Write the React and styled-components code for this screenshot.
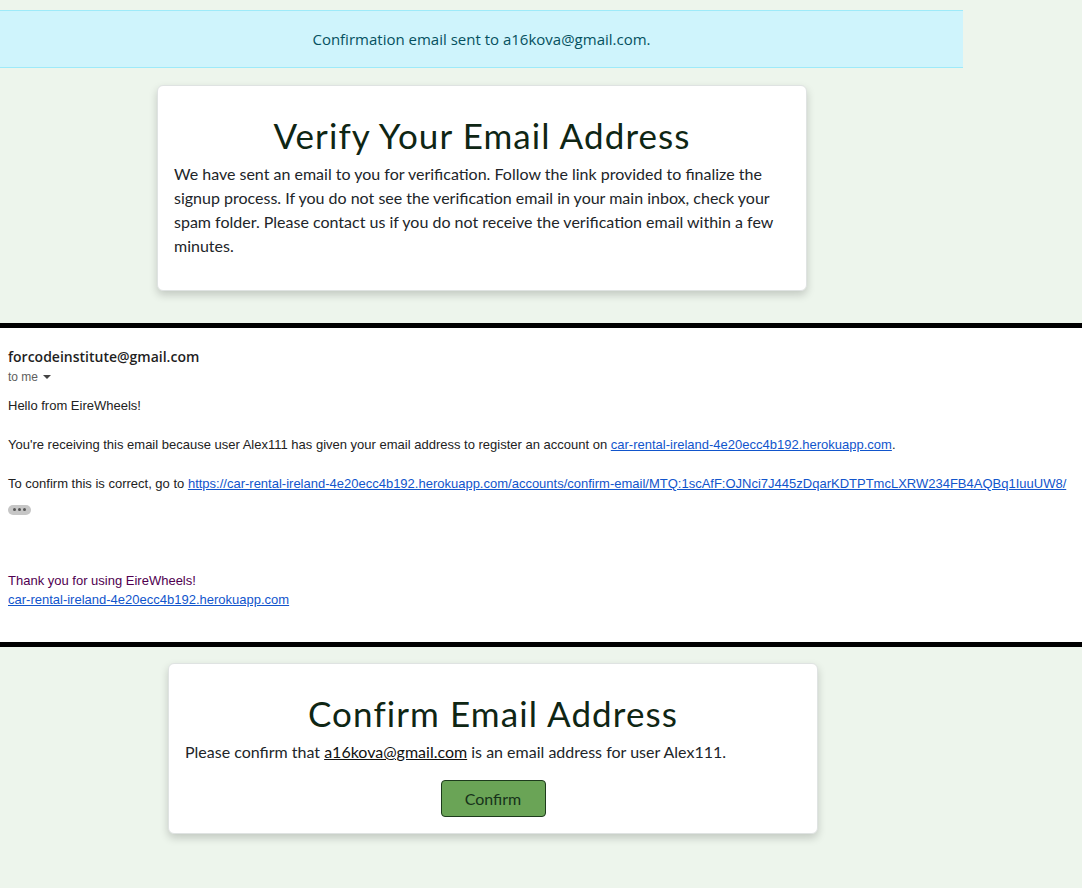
import React from 'react';
import styled, { createGlobalStyle } from 'styled-components';

const GlobalStyle = createGlobalStyle`
  * { box-sizing: border-box; }
  html, body {
    margin: 0;
    padding: 0;
    background: #edf5ec;
  }
  body {
    font-family: Lato, "Open Sans", sans-serif;
    color: #212529;
  }
`;

const Page = styled.div`
  width: 1082px;
  height: 888px;
  display: flex;
  flex-direction: column;
  overflow: hidden;
`;

const SiteShot = styled.section`
  background: #edf5ec;
  display: flex;
  flex-direction: column;
  padding-top: ${p => p.$top || 0}px;
  height: ${p => p.$height}px;
  flex-shrink: 0;
`;

const Divider = styled.div`
  height: 5px;
  background: #000;
  flex-shrink: 0;
`;

const Alert = styled.div`
  width: 963px;
  background: #cff4fc;
  border-top: 1px solid #9eeaf9;
  border-bottom: 1px solid #9eeaf9;
  color: #055160;
  text-align: center;
  line-height: 24px;
  padding: 16px;
  font-family: "Open Sans", Lato, sans-serif;
  font-size: 15px;
`;

const Card = styled.div`
  width: 650px;
  margin-left: ${p => p.$left}px;
  margin-top: ${p => p.$gap || 0}px;
  background: #fff;
  border: 1px solid #dfe3e2;
  border-radius: 6px;
  box-shadow: 0 4px 8px rgba(0, 0, 0, 0.18);
  padding: 15px 16px 16px;
  display: flex;
  flex-direction: column;
`;

const Heading = styled.h1`
  margin: 15px 0 8px;
  text-align: center;
  font-weight: 400;
  font-size: 35px;
  line-height: 38px;
  color: #0f2614;
  letter-spacing: 1.1px;
`;

const Text = styled.p`
  margin: 0 0 ${p => (p.$last ? 16 : 0)}px;
  font-size: 16px;
  line-height: 24px;
  color: #212529;
`;

const Underlined = styled.span`
  text-decoration: underline;
  color: #111;
`;

const ButtonRow = styled.div`
  display: flex;
  justify-content: center;
  margin-top: 16px;
`;

const ConfirmButton = styled.button`
  width: 105px;
  height: 37px;
  background: #6aa456;
  border: 1px solid #1d3b1c;
  border-radius: 4px;
  color: #17321a;
  font-family: Lato, sans-serif;
  font-size: 16px;
`;

const Mail = styled.section`
  background: #fff;
  height: 314px;
  padding: 19px 8px 0;
  font-family: "Liberation Sans", Arial, sans-serif;
  flex-shrink: 0;
`;

const Sender = styled.div`
  font-family: "Open Sans", Roboto, sans-serif;
  font-weight: 600;
  font-size: 14px;
  line-height: 20px;
  color: #1f1f1f;
`;

const Recipient = styled.div`
  display: flex;
  align-items: center;
  gap: 5px;
  font-size: 12px;
  line-height: 16px;
  color: #5e5e5e;
  margin-top: 2px;
`;

const Caret = styled.span`
  width: 0;
  height: 0;
  border-left: 4px solid transparent;
  border-right: 4px solid transparent;
  border-top: 4px solid #444;
`;

const MailBody = styled.div`
  margin-top: 11px;
  font-size: 13px;
  line-height: 19.5px;
  color: #222;
`;

const MailLine = styled.div`
  margin-bottom: ${p => p.$gap ?? 19.5}px;
  color: ${p => p.$color || '#222'};
  white-space: nowrap;
`;

const MailLink = styled.a`
  color: #1155cc;
  text-decoration: underline;
`;

const Ellipsis = styled.div`
  width: 23px;
  height: 10px;
  border-radius: 5px;
  background: #c6c6c6;
  display: flex;
  align-items: center;
  justify-content: center;
  gap: 2px;
  margin: 11px 0 56px;

  span {
    width: 3px;
    height: 3px;
    border-radius: 50%;
    background: #555;
  }
`;

const App = () => {
  return (
    <>
      <GlobalStyle />
      <Page>
        <SiteShot $top={10} $height={323}>
          <Alert>Confirmation email sent to a16kova@gmail.com.</Alert>
          <Card $left={157} $gap={17}>
            <Heading>Verify Your Email Address</Heading>
            <Text $last>
              We have sent an email to you for verification. Follow the link provided to finalize the
              signup process. If you do not see the verification email in your main inbox, check your
              spam folder. Please contact us if you do not receive the verification email within a few
              minutes.
            </Text>
          </Card>
        </SiteShot>
        <Divider />
        <Mail>
          <Sender>forcodeinstitute@gmail.com</Sender>
          <Recipient>
            to me <Caret />
          </Recipient>
          <MailBody>
            <MailLine>Hello from EireWheels!</MailLine>
            <MailLine>
              You're receiving this email because user Alex111 has given your email address to register an account on{' '}
              <MailLink href="#">car-rental-ireland-4e20ecc4b192.herokuapp.com</MailLink>.
            </MailLine>
            <MailLine $gap={0}>
              To confirm this is correct, go to{' '}
              <MailLink href="#">
                https://car-rental-ireland-4e20ecc4b192.herokuapp.com/accounts/confirm-email/MTQ:1scAfF:OJNci7J445zDqarKDTPTmcLXRW234FB4AQBq1IuuUW8/
              </MailLink>
            </MailLine>
            <Ellipsis>
              <span />
              <span />
              <span />
            </Ellipsis>
            <MailLine $gap={0} $color="#500050">Thank you for using EireWheels!</MailLine>
            <MailLine $gap={0}>
              <MailLink href="#">car-rental-ireland-4e20ecc4b192.herokuapp.com</MailLink>
            </MailLine>
          </MailBody>
        </Mail>
        <Divider />
        <SiteShot $top={16} $height={241}>
          <Card $left={168}>
            <Heading>Confirm Email Address</Heading>
            <Text>
              Please confirm that <Underlined>a16kova@gmail.com</Underlined> is an email address for user Alex111.
            </Text>
            <ButtonRow>
              <ConfirmButton>Confirm</ConfirmButton>
            </ButtonRow>
          </Card>
        </SiteShot>
      </Page>
    </>
  );
};

export default App;
